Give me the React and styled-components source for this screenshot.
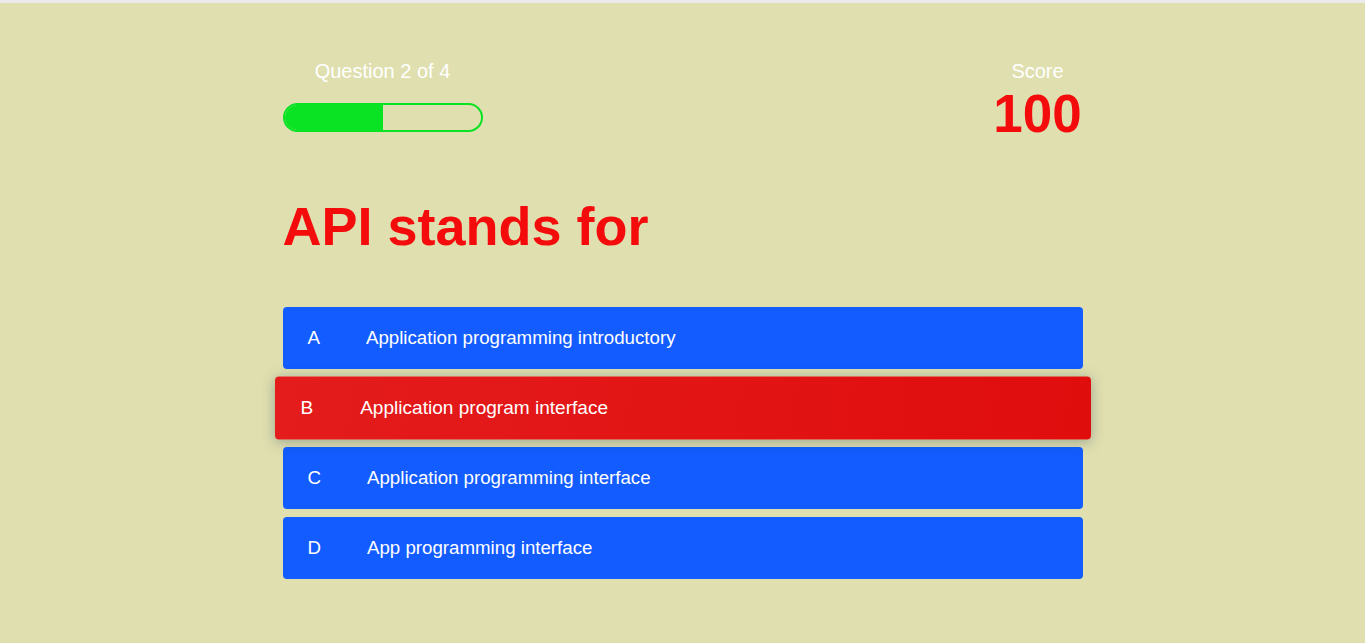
import React from "react";
import styled, { createGlobalStyle } from "styled-components";

const GlobalStyle = createGlobalStyle`
  html, body { margin: 0; padding: 0; }
  body {
    background: #e0dfaf;
    font-family: "Liberation Sans", Arial, sans-serif;
  }
`;

const TopStrip = styled.div`
  height: 3px;
  background: #ebebeb;
`;

const Page = styled.main`
  min-height: 640px;
  display: flex;
  justify-content: center;
  padding-top: 57px;
  box-sizing: border-box;
`;

const Quiz = styled.section`
  width: 800px;
  display: flex;
  flex-direction: column;
`;

const Header = styled.header`
  display: flex;
  justify-content: space-between;
  align-items: flex-start;
`;

const Progress = styled.div`
  width: 200px;
  display: flex;
  flex-direction: column;
  gap: 20px;
`;

const Label = styled.div`
  color: #ffffff;
  font-size: 20px;
  line-height: 23px;
  text-align: center;
`;

const Bar = styled.div`
  height: 25px;
  border: 2px solid #0ae224;
  border-radius: 15px;
  overflow: hidden;
`;

const Fill = styled.div`
  height: 100%;
  background: #0ae224;
`;

const ScoreBox = styled.div`
  width: 90px;
  display: flex;
  flex-direction: column;
  align-items: center;
`;

const ScoreValue = styled.div`
  color: #f40b0b;
  font-size: 53px;
  font-weight: 700;
  line-height: 62px;
`;

const Question = styled.h1`
  margin: 50px 0 50px;
  color: #f40b0b;
  font-size: 54px;
  line-height: 62px;
  font-weight: 700;
`;

const Options = styled.div`
  display: flex;
  flex-direction: column;
  gap: 8px;
`;

const Option = styled.button`
  height: 62px;
  display: flex;
  align-items: center;
  padding: 0 0 0 25px;
  border: none;
  border-radius: 4px;
  color: #ffffff;
  font-family: inherit;
  font-size: 18.7px;
  text-align: left;
  cursor: pointer;
  background: ${(p) =>
    p.$selected ? "linear-gradient(100deg, #e41c1c, #e00d0d)" : "#135cff"};
  transform: ${(p) => (p.$selected ? "scale(1.02)" : "none")};
  box-shadow: ${(p) =>
    p.$selected ? "0 2px 12px rgba(40, 70, 100, 0.38)" : "none"};
`;

const Letter = styled.span`
  margin-right: 46px;
`;

const options = [
  { letter: "A", text: "Application programming introductory" },
  { letter: "B", text: "Application program interface", selected: true },
  { letter: "C", text: "Application programming interface" },
  { letter: "D", text: "App programming interface" },
];

export default function App() {
  const current = 2;
  const total = 4;
  return (
    <>
      <GlobalStyle />
      <TopStrip />
      <Page>
        <Quiz>
          <Header>
            <Progress>
              <Label>
                Question {current} of {total}
              </Label>
              <Bar>
                <Fill style={{ width: `${(current / total) * 100}%` }} />
              </Bar>
            </Progress>
            <ScoreBox>
              <Label>Score</Label>
              <ScoreValue>100</ScoreValue>
            </ScoreBox>
          </Header>
          <Question>API stands for</Question>
          <Options>
            {options.map((o) => (
              <Option key={o.letter} $selected={o.selected}>
                <Letter>{o.letter}</Letter>
                {o.text}
              </Option>
            ))}
          </Options>
        </Quiz>
      </Page>
    </>
  );
}
